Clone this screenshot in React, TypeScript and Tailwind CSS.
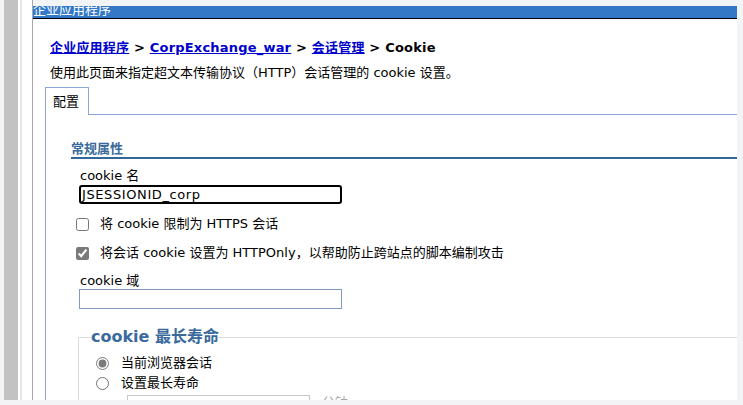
const linkCls = "text-[#0000cc] underline";

const CheckRow = ({ checked, label }: { checked: boolean; label: string }) => {
  return (
    <label className="ml-[5px] flex h-[16px] items-center gap-[11px] leading-[16px]">
      <input
        type="checkbox"
        defaultChecked={checked}
        className="m-0 h-[13px] w-[13px] accent-[#7a7a7a]"
      />
      <span>{label}</span>
    </label>
  );
};

const RadioRow = ({ checked, label }: { checked: boolean; label: string }) => {
  return (
    <label className="ml-[5px] flex h-[16px] items-center gap-[12px] leading-[16px]">
      <input
        type="radio"
        name="maxAge"
        defaultChecked={checked}
        className="m-0 h-[13px] w-[13px] accent-[#7a7a7a]"
      />
      <span>{label}</span>
    </label>
  );
};

export default function App() {
  return (
    <div className="flex h-[405px] w-[743px] flex-col overflow-hidden bg-[#f3f4f6] pb-[5px] font-['DejaVu_Sans','Noto_Sans_CJK_SC',sans-serif] text-[13px] text-black">
      <div className="flex min-h-0 flex-1">
        {/* left frame strips */}
        <div className="w-[4px] bg-[#f4f4f4]" />
        <div className="w-[14px] bg-[#c2c2c2]" />
        <div className="w-[2px] bg-white" />
        <div className="w-[2px] bg-[#e6e6e6]" />
        <div className="w-[10px] bg-white" />
        <div className="w-px bg-[#a9a9a9]" />

        <div className="flex min-w-0 flex-1 flex-col pt-[6px] pr-[6px]">
          <div className="h-[13px] overflow-hidden border-b border-black bg-[#3278c6] text-white">
            <div className="-mt-[3px] leading-[13px]">企业应用程序</div>
          </div>

          <div className="flex min-h-0 flex-1 flex-col overflow-hidden bg-white pl-[12px]">
            <nav className="mt-[21px] ml-[5px] font-bold leading-[16px] tracking-[0.2px] whitespace-nowrap">
              <a className={linkCls}>企业应用程序</a> &gt;{" "}
              <a className={linkCls}>CorpExchange_war</a> &gt;{" "}
              <a className={linkCls}>会话管理</a> &gt; Cookie
            </nav>
            <p className="mt-[9px] ml-[5px] leading-[16px] whitespace-nowrap">
              使用此页面来指定超文本传输协议（HTTP）会话管理的 cookie 设置。
            </p>

            <div className="mt-[6px] flex">
              <div className="h-[28px] w-[44px] border border-b-0 border-[#8ba6d8] pl-[7px] leading-[27px]">
                配置
              </div>
              <div className="h-[28px] flex-1 border-b border-[#8ba6d8]" />
            </div>

            <div className="min-h-0 flex-1 border-l border-[#8ba6d8] pl-[25px]">
              <h3 className="mt-[26px] border-b-2 border-[#336699] font-bold leading-[16px] text-[#3a6a9c]">
                常规属性
              </h3>

              <div className="mt-[9px] ml-[9px] leading-[16px]">cookie 名</div>
              <div className="mt-px ml-[8px] flex h-[19px] w-[263px] items-center overflow-hidden rounded-[3px] border-2 border-black pl-px leading-[15px] tracking-[0.6px] whitespace-nowrap">
                <span className="underline decoration-[#e02424] decoration-wavy decoration-1 underline-offset-[3px]">
                  JSESSIONID
                </span>
                _corp
              </div>

              <div className="mt-[12px]">
                <CheckRow checked={false} label="将 cookie 限制为 HTTPS 会话" />
              </div>
              <div className="mt-[13px]">
                <CheckRow
                  checked={true}
                  label="将会话 cookie 设置为 HTTPOnly，以帮助防止跨站点的脚本编制攻击"
                />
              </div>

              <div className="mt-[12px] ml-[9px] leading-[16px]">cookie 域</div>
              <input
                type="text"
                className="ml-[8px] block h-[20px] w-[263px] border border-[#7f9cc0] px-1 outline-none"
              />

              <fieldset className="mt-[18px] ml-[7px] w-[700px] border border-[#dcdcdc] pb-4 pl-[12px]">
                <legend className="px-0 text-[16px] leading-[20px] font-bold text-[#3a6a9c]">
                  cookie 最长寿命
                </legend>
                <div className="mt-[8px]">
                  <RadioRow checked={true} label="当前浏览器会话" />
                </div>
                <div className="mt-[4px]">
                  <RadioRow checked={false} label="设置最长寿命" />
                </div>
                <div className="mt-[4px] ml-[36px] flex items-start gap-[12px]">
                  <input
                    type="text"
                    disabled
                    className="block h-[20px] w-[183px] border border-[#c8c8c8] bg-white"
                  />
                  <span className="leading-[16px] text-[#a8a8a8]">分钟</span>
                </div>
              </fieldset>
            </div>
          </div>
        </div>
      </div>
    </div>
  );
}
